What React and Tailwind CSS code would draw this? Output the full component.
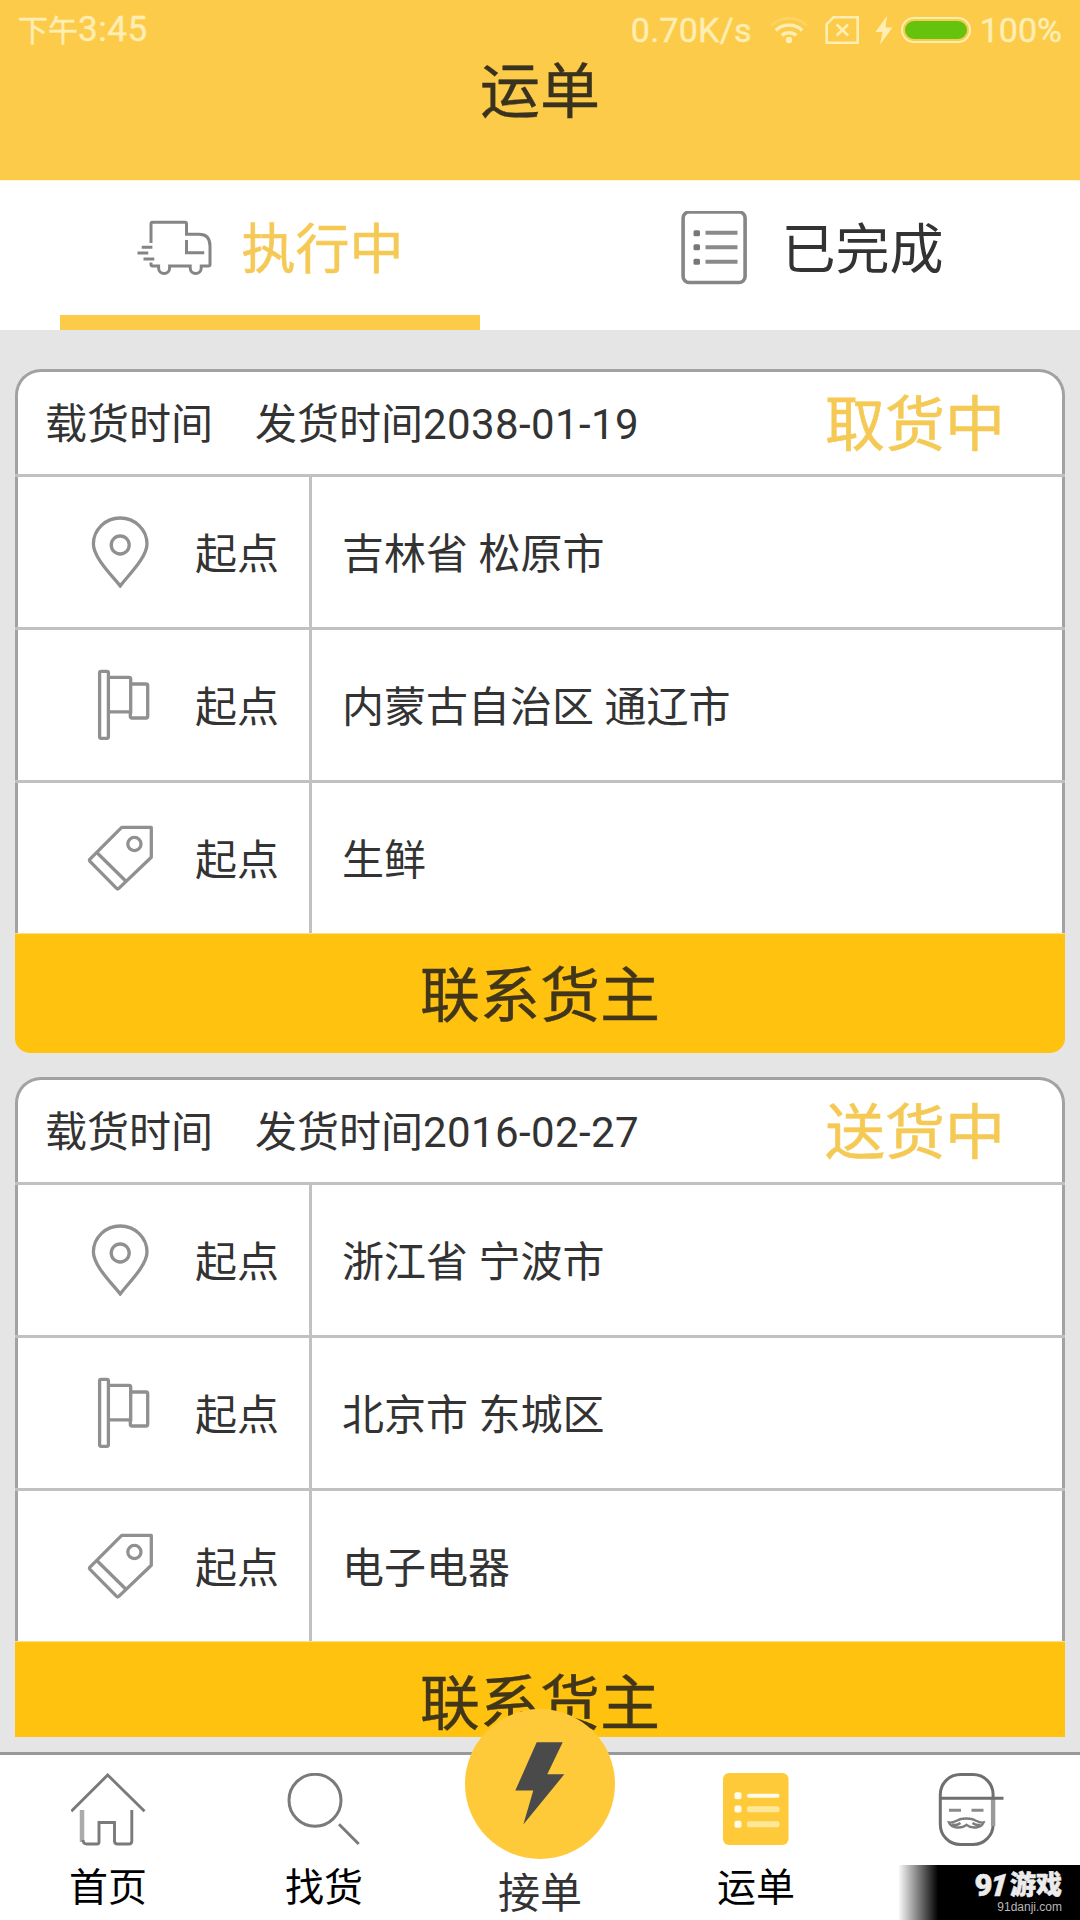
import React from "react";

const orders = [
  { date: "2038-01-19", status: "取货中", from: "吉林省 松原市", to: "内蒙古自治区 通辽市", goods: "生鲜" },
  { date: "2016-02-27", status: "送货中", from: "浙江省 宁波市", to: "北京市 东城区", goods: "电子电器" },
];

function WifiIcon() {
  return (
    <svg className="ml-[18px] h-[30px] w-[38px]" viewBox="770 15 38 30" fill="none" stroke="#feeeb4" strokeWidth="3.4">
      <circle cx="789" cy="40" r="3.2" fill="#feeeb4" stroke="none" />
      <path d="M781.8 35.5a9.5 8 0 0 1 14.4 0" />
      <path d="M775.8 30.5a17 14.5 0 0 1 26.4 0" />
      <path d="M771 25.5a23 19 0 0 1 36 0" stroke="#fdd567" strokeWidth="2.4" />
    </svg>
  );
}

function SimIcon() {
  return (
    <svg className="ml-[17px] h-[30px] w-[35px]" viewBox="825 14 35 30" fill="none" stroke="#feeeb4" strokeWidth="2.6">
      <path d="M833.5 16.2H857.7V41.8H826.7V23.2Z" />
      <path d="M836.7 23.5l11.4 11M848.1 23.5l-11.4 11" />
    </svg>
  );
}

function ChargeIcon() {
  return (
    <svg className="ml-[15px] h-[30px] w-[18px]" viewBox="875 15 18 30" fill="#feeeb4">
      <path d="M887 16L875.5 32H882.5L880 44.5L892.5 27.5H885.5Z" />
    </svg>
  );
}

function StatusBar() {
  return (
    <div className="flex h-[60px] items-center pl-[18px] pr-[18px] text-[34px] leading-[60px] text-[#feeeb4] [-webkit-text-stroke:0.4px]">
      <span className="pt-[2px] text-[30px]">下午</span>
      <span className="text-[35px] tracking-[0.6px]">3:45</span>
      <span className="ml-auto tracking-[0.25px]">0.70K/s</span>
      <WifiIcon />
      <SimIcon />
      <ChargeIcon />
      <span className="ml-[8px] flex h-[26px] w-[70px] rounded-full border-2 border-[#feeeb4] p-[2px]">
        <span className="flex-1 rounded-full bg-[#66c30d]" />
      </span>
      <span className="ml-[9px]">100%</span>
    </div>
  );
}

function TruckIcon() {
  return (
    <svg className="h-[75px] w-[75px]" viewBox="136.5 211 75 75" fill="none" stroke="#858585" strokeWidth="3">
      <path d="M150.5 243V224Q150.5 222.3 152 222.3H184.5Q186 222.3 186 224V234.3H198.5Q209.5 234.3 209.5 246V264.5Q209.5 266 208 266H200.7V268a5.5 5.5 0 0 1-11 0V266H169.1V268a5.5 5.5 0 0 1-11 0V266H152Q150.5 266 150.5 264.5V262.5" />
      <path d="M186 240V252.7H203.7" />
      <path d="M141.2 247.2H151.9M137 253H147.8M143 259H153.8" />
    </svg>
  );
}

function ListIcon() {
  return (
    <svg className="h-[75px] w-[75px]" viewBox="676.5 211 75 75" fill="none">
      <rect x="682.6" y="212" width="62" height="70.5" rx="6" stroke="#868686" strokeWidth="3.6" />
      <g fill="#777777">
        <rect x="693" y="230.2" width="6.5" height="6" rx="1.5" />
        <rect x="693" y="244.2" width="6.5" height="6" rx="1.5" />
        <rect x="693" y="258.7" width="6.5" height="6" rx="1.5" />
      </g>
      <path d="M705 232.7H737M705 247.2H737M705 261.7H737" stroke="#8a8a8a" strokeWidth="4" />
    </svg>
  );
}

function PinIcon() {
  return (
    <svg className="h-[72px] w-[72px]" viewBox="84 515.5 72 72" fill="none" stroke="#909090" strokeWidth="3.3">
      <path d="M120.2 585.5C112 575 93.4 557 93.4 543.5a26.8 26 0 0 1 53.6 0C147 557 128 575 120.2 585.5Z" />
      <circle cx="120.2" cy="544.5" r="9" />
    </svg>
  );
}

function FlagIcon() {
  return (
    <svg className="h-[72px] w-[72px]" viewBox="84 669 72 72" fill="none" stroke="#909090" strokeWidth="3.3">
      <rect x="99.6" y="671.3" width="8.8" height="67" rx="1.5" />
      <path d="M108.4 677.3H129Q130.7 677.3 130.7 679V711.8H108.4" />
      <path d="M130.7 684H146Q147.7 684 147.7 685.7V716.3Q147.7 718 146 718H132Q130.3 718 130.3 716.3V711" />
    </svg>
  );
}

function TagIcon() {
  return (
    <svg className="h-[72px] w-[72px]" viewBox="84 822 72 72" fill="none" stroke="#909090" strokeWidth="3.3" strokeLinejoin="round">
      <path d="M121.7 827.4H151.3V857.2L118.8 888.4Q117.7 889.4 116.6 888.4L90 861.3Q89 860.2 90 859.1Z" />
      <path d="M97.3 853L125.7 881" />
      <circle cx="134.4" cy="844" r="6.6" />
    </svg>
  );
}

function Row({ icon, value }) {
  return (
    <div className="flex h-[150px] border-x-[3px] border-[#a2a2a2] bg-white">
      <div className="flex w-[294px] items-center border-r-[3px] border-[#c1c1c1] pl-[66px]">
        {icon}
        <span className="ml-[39px] pt-[6px]">起点</span>
      </div>
      <div className="flex items-center pl-[30px] pt-[6px]">{value}</div>
    </div>
  );
}

function Separator() {
  return <div className="h-[3px] bg-[#c1c1c1]" />;
}

function OrderCard({ order }) {
  return (
    <section className="mb-6 h-[684px] shrink-0 text-[42px] leading-[60px] text-[#333333]">
      <header className="flex h-[105px] items-center rounded-t-[26px] border-x-[3px] border-t-[3px] border-[#a2a2a2] bg-white pl-[27px] pr-[57px]">
        <span className="pt-[3px]">载货时间</span>
        <span className="ml-[42px] pt-[3px]">
          发货时间<span className="tracking-[0.4px]">{order.date}</span>
        </span>
        <span className="ml-auto pt-[6px] text-[60px] text-[#f5c955] [-webkit-text-stroke:0.6px]">{order.status}</span>
      </header>
      <Separator />
      <Row icon={<PinIcon />} value={order.from} />
      <Separator />
      <Row icon={<FlagIcon />} value={order.to} />
      <Separator />
      <Row icon={<TagIcon />} value={order.goods} />
      <button className="flex h-[120px] w-full items-center justify-center rounded-b-[15px] border-t border-[#fbe08a] bg-[#fec20f] pt-[6px] text-[60px] text-[#41351a] [-webkit-text-stroke:0.4px]">
        联系货主
      </button>
    </section>
  );
}

function HomeIcon() {
  return (
    <svg className="h-[75px] w-[75px]" viewBox="71 1773 75 75" fill="none" stroke="#7a7a7a" strokeWidth="2.9">
      <path d="M71.3 1811.2L107.7 1775L144.5 1811.2" />
      <path d="M82 1810V1842" stroke="#ababab" strokeWidth="4.5" />
      <path d="M83 1840Q83 1844 87 1844H97Q99 1844 99 1842V1822.5H114.5V1841Q114.5 1844 117.5 1844H129Q131.8 1844 131.8 1841V1810" />
    </svg>
  );
}

function SearchIcon() {
  return (
    <svg className="h-[75px] w-[75px]" viewBox="287 1773 75 75" fill="none" stroke="#7a7a7a" strokeWidth="3">
      <circle cx="315" cy="1800.3" r="26" />
      <path d="M339 1824.3L358.7 1844" />
    </svg>
  );
}

function OrdersIcon() {
  return (
    <svg className="h-[75px] w-[75px]" viewBox="719 1773 75 75">
      <rect x="723" y="1773" width="65.5" height="72" rx="6" fill="#ffca3a" />
      <g fill="#fffbea">
        <rect x="734.5" y="1792.3" width="7" height="7" rx="2" />
        <rect x="734.5" y="1805.6" width="7" height="7" rx="2" />
        <rect x="734.5" y="1820.8" width="7" height="7" rx="2" />
        <rect x="747" y="1793.7" width="32.5" height="4" rx="2" />
      </g>
      <g fill="#ffe799">
        <rect x="747" y="1806.2" width="32.5" height="6" rx="2" />
        <rect x="747" y="1821.3" width="32.5" height="6" rx="2" />
      </g>
    </svg>
  );
}

function ProfileIcon() {
  return (
    <svg className="h-[75px] w-[75px]" viewBox="935.5 1773 75 75" fill="none" stroke="#6f6f6f" strokeWidth="3">
      <rect x="940.8" y="1774.5" width="52.8" height="70" rx="20" />
      <path d="M993.6 1797V1826" stroke="#9a9a9a" strokeWidth="4.4" />
      <path d="M941 1798.2H1004" />
      <path d="M949.5 1810.3H961.5M972 1810.3H984" stroke="#8a8a8a" />
      <path d="M949.5 1822.5C955 1823.5 958 1819 963 1818.8Q966.8 1818.3 970.5 1818.8C975.5 1819 979 1823.5 984 1822.5C981.5 1828.5 972 1829 967 1824.8C962 1829 952 1828.5 949.5 1822.5Z" stroke="#7c7c7c" strokeWidth="2.4" />
      <path d="M952.5 1824.5Q957 1826 961 1823M981 1824.5Q977 1826 973 1823" stroke="#7c7c7c" strokeWidth="2.4" />
    </svg>
  );
}

function NavItem({ icon, label }) {
  return (
    <a className="flex w-[216px] flex-col items-center pt-[18px] text-[39px] leading-[60px] text-black">
      {icon}
      <span className="pt-[10px]">{label}</span>
    </a>
  );
}

function Watermark() {
  return (
    <div className="absolute bottom-0 right-0 flex h-[55px] w-[182px] flex-col items-end bg-linear-to-r from-transparent to-black to-[22%] pr-[18px] pt-[6px]">
      <div className="flex items-center text-[26px] font-black leading-[29px] text-[#ececec] [-webkit-text-stroke:0.6px]">
        <span className="text-[31px]">9</span>
        <span className="mr-[3px] -ml-[3px] -skew-x-6 text-[31px] italic">1</span>
        <span>游戏</span>
      </div>
      <div className="font-['Liberation_Sans',sans-serif] text-[12px] leading-[14px] text-[#b8b8b8]">91danji.com</div>
    </div>
  );
}

export default function App() {
  return (
    <div className="relative flex h-[1920px] w-[1080px] flex-col overflow-hidden bg-[#e5e5e5] font-['Roboto','Noto_Sans_CJK_SC',sans-serif] whitespace-nowrap">
      <div className="h-[181px] border-b border-[#fff7cc] bg-[#fdcb4a]">
        <StatusBar />
        <h1 className="pt-[1px] text-center text-[60px] leading-[64px] text-[#38321f] [-webkit-text-stroke:0.4px]">运单</h1>
      </div>

      <div className="flex h-[149px] bg-white text-[54px] leading-[60px]">
        <div className="flex w-1/2 flex-col">
          <div className="flex flex-1 items-center justify-center text-[#f5c955]">
            <TruckIcon />
            <span className="ml-[30px] pt-[6px] [-webkit-text-stroke:0.6px]">执行中</span>
          </div>
          <div className="mx-[60px] h-[15px] bg-[#fdcb4a]" />
        </div>
        <div className="flex w-1/2 items-center justify-center pb-[15px] text-[#333333]">
          <ListIcon />
          <span className="ml-[30px] pt-[6px]">已完成</span>
        </div>
      </div>

      <main className="mx-[15px] mt-[39px] flex h-[1368px] flex-col overflow-hidden">
        {orders.map((order) => (
          <OrderCard key={order.date} order={order} />
        ))}
      </main>

      <nav className="mt-[15px] flex h-[168px] border-t-[3px] border-[#999999] bg-white">
        <NavItem icon={<HomeIcon />} label="首页" />
        <NavItem icon={<SearchIcon />} label="找货" />
        <a className="-mt-[46px] flex w-[216px] flex-col items-center text-[42px] leading-[60px] text-[#333333]">
          <svg className="h-[150px] w-[150px] shrink-0" viewBox="465 1709 150 150">
            <circle cx="540" cy="1784" r="75" fill="#ffca3a" />
            <path d="M536.7 1742.3H562.7L547.3 1774.3H564.3L523.3 1824.5L533.3 1790.6H515.3Z" fill="#4a4a4a" />
          </svg>
          <span className="pt-[5px]">接单</span>
        </a>
        <NavItem icon={<OrdersIcon />} label="运单" />
        <NavItem icon={<ProfileIcon />} label="" />
      </nav>
      <Watermark />
    </div>
  );
}
